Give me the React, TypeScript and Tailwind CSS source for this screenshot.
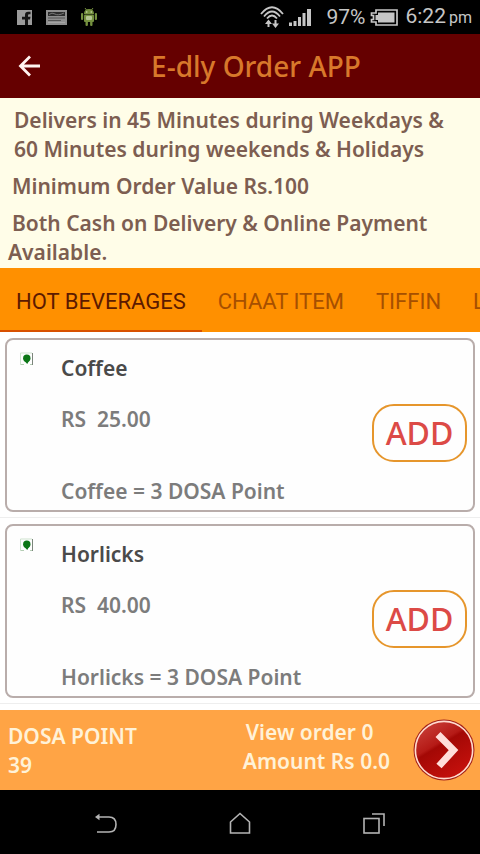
import { useState } from 'react';

const menu = [
  { name: 'Coffee', price: 25, points: 3 },
  { name: 'Horlicks', price: 40, points: 3 },
];

const tabs = ['HOT BEVERAGES', 'CHAAT ITEM', 'TIFFIN', 'LUNCH'];

function StatusBar() {
  return (
    <div className="h-[34px] shrink-0 bg-black flex items-center justify-between pl-[17px] pr-2 text-[#c6c6c6] font-normal">
      <div className="flex items-center gap-[14px]">
        <svg width="15" height="15" viewBox="0 0 15 15" aria-hidden="true">
          <rect width="15" height="15" fill="#9b9b9b" />
          <path d="M8 15V9.500H5V6.800H8V5Q8 1.700 11.200 1.700H13.500V4.300H12Q11 4.300 11 5.400V6.800H13.500L13 9.500H11V15Z" fill="#151515" />
        </svg>
        <svg width="21" height="15" viewBox="0 0 21 15" aria-hidden="true">
          <rect width="21" height="15" fill="#8f8f8f" />
          <rect x="2" y="2" width="17" height="4" fill="#2c2c2c" />
          <path d="M3 4.500Q6 2 9 4T18 3" stroke="#777" fill="none" />
          <path d="M2 8H19M2 10.500H15" stroke="#555" />
          <path d="M2 12.500H19" stroke="#a5a5a5" />
        </svg>
        <svg width="16" height="18" viewBox="0 0 16 18" fill="#74903f" aria-hidden="true">
          <path d="M4 0L5.500 2M12 0L10.500 2" stroke="#74903f" />
          <path d="M3 6Q3 1 8 1T13 6Z" />
          <rect x="3" y="6.500" width="10" height="7.500" rx="1" />
          <rect x="0" y="5" width="2.200" height="7" rx="1" />
          <rect x="13.800" y="5" width="2.200" height="7" rx="1" />
          <rect x="4.500" y="13" width="2.400" height="5" rx="1" />
          <rect x="9.100" y="13" width="2.400" height="5" rx="1" />
          <circle cx="5.800" cy="4" r="0.700" fill="#e5eccb" />
          <circle cx="10.200" cy="4" r="0.700" fill="#e5eccb" />
          <rect x="5" y="8" width="6" height="4" rx="1" fill="#b5c693" />
        </svg>
      </div>
      <div className="flex items-center">
        <svg width="24" height="23" viewBox="0 0 24 23" fill="none" stroke="#c6c6c6" strokeWidth="1.800" aria-hidden="true">
          <path d="M1 8Q12 -5.500 23 8" />
          <path d="M4 10.500Q12 0.500 20 10.500" />
          <path d="M7 12.500Q12 6.500 17 12.500" />
          <path d="M8.500 21V15M15.500 14V20" strokeWidth="2" />
          <path d="M5 18L8.500 13.500L12 18ZM12 17.500L15.500 22L19 17.500Z" fill="#c6c6c6" stroke="none" />
        </svg>
        <svg className="ml-[5px]" width="22" height="17" viewBox="0 0 22 17" fill="#c6c6c6" aria-hidden="true">
          <path d="M0 13.500H3V17H0ZM4.500 12H7.500V17H4.500ZM9 8H12V17H9ZM13.500 4H16.500V17H13.500ZM18 0H22V17H18Z" />
        </svg>
        <span className="ml-[15px] font-['Roboto'] text-[21px] leading-6">97%</span>
        <svg className="ml-[5px]" width="28" height="17" viewBox="0 0 28 17" aria-hidden="true">
          <path d="M6 1H27V16H6V13H1.500V10.500H3.500V6.500H1.500V4H6Z" fill="none" stroke="#c6c6c6" strokeWidth="1.700" />
          <path d="M8 3.500H24.500V13.500H8V11H5.500V6H8Z" fill="#c6c6c6" />
        </svg>
        <span className="ml-[7px] font-['Roboto'] text-[21px] leading-6 whitespace-nowrap">
          6:22<span className="ml-[3px] text-[16px]">pm</span>
        </span>
      </div>
    </div>
  );
}

function VegMark() {
  return (
    <svg width="14" height="14" viewBox="0 0 14 14" aria-hidden="true">
      <path d="M0.500 13V1H12" fill="none" stroke="#cfe3cf" />
      <path d="M12.500 1V13" stroke="#7b857b" />
      <path d="M1 12.500H4M10 12.500H12" stroke="#b5cdb5" />
      <circle cx="6.800" cy="6.300" r="3.700" fill="#0b7616" />
      <path d="M4.500 9H9L7.200 12Z" fill="#0b7616" />
    </svg>
  );
}

export default function App() {
  const [activeTab, setActiveTab] = useState('HOT BEVERAGES');
  const [order, setOrder] = useState({ count: 0, amount: 0 });

  const addItem = (price: number) => {
    setOrder({ count: order.count + 1, amount: order.amount + price });
  };

  return (
    <div className="min-h-screen w-full flex flex-col overflow-x-hidden bg-white font-['Noto_Sans',sans-serif] font-semibold">
      <StatusBar />

      {/* Header */}
      <header className="h-16 shrink-0 bg-[#650000] flex items-center px-[18px]">
        <button aria-label="Back" className="w-6 h-6 shrink-0">
          <svg width="24" height="24" viewBox="0 0 24 24" fill="none" stroke="#fff4f1" strokeWidth="2.800">
            <path d="M22 12H3M12 2.500L2.500 12L12 21.500" />
          </svg>
        </button>
        <h1 className="flex-1 pl-2 text-center text-[28px] leading-8 font-medium text-[#d8782b]">E-dly Order APP</h1>
      </header>

      {/* Delivery info */}
      <section className="shrink-0 bg-[#fffde8] pt-2 pb-[1px] px-2 text-[21px] leading-[29px] text-[#7d5e51]">
        <p className="pl-[6px]">
          Delivers in 45 Minutes during Weekdays &amp;<br />
          60 Minutes during weekends &amp; Holidays
        </p>
        <p className="mt-2 pl-1">Minimum Order Value Rs.100</p>
        <p className="mt-2 indent-1">Both Cash on Delivery &amp; Online Payment Available.</p>
      </section>

      {/* Category tabs */}
      <nav className="h-16 shrink-0 bg-[#ff9000] flex overflow-hidden font-['Roboto'] font-normal text-[22px]">
        {tabs.map((tab) => (
          <button
            key={tab}
            onClick={() => setActiveTab(tab)}
            className={`h-16 shrink-0 px-4 pt-1 border-b-2 whitespace-nowrap ${
              activeTab === tab ? 'border-[#d85000] text-[#5c1a00]' : 'border-transparent text-[#a64f00]'
            }`}
          >
            {tab}
          </button>
        ))}
      </nav>

      {/* Items */}
      <main className="flex-1 bg-white">
        {menu.map((item) => (
          <div key={item.name} className="px-[5px] pt-[6px] pb-[5px] border-b border-[#eeeeee]">
            <article className="flex items-stretch rounded-lg border-2 border-[#b9adab] bg-[#fefefe] pl-[13px] pr-[6px] py-3">
              <div className="w-[41px] shrink-0">
                <VegMark />
              </div>
              <div className="flex-1 text-[21px] leading-[29px] text-[#7c7c7c]">
                <h2 className="text-[#4a4a4a] mt-[2px]">{item.name}</h2>
                <p className="mt-[22px] whitespace-pre">RS  {item.price.toFixed(2)}</p>
                <p className="mt-[43px] -mb-2">{item.name} = {item.points} DOSA Point</p>
              </div>
              <button
                onClick={() => addItem(item.price)}
                className="self-center mt-4 h-[58px] w-[95px] shrink-0 rounded-[22px] border-2 border-[#e6962c] text-[32px] leading-10 font-medium text-[#dc4a46]"
              >
                ADD
              </button>
            </article>
          </div>
        ))}
      </main>

      {/* Order summary */}
      <footer className="h-20 shrink-0 bg-[#ffa445] flex items-center pl-2 pr-[5px] text-[21px] leading-[29px] text-[#fff2d8]">
        <div className="flex-1 pt-[2px]">
          <p>DOSA POINT</p>
          <p>39</p>
        </div>
        <div className="pb-[6px]">
          <p className="pl-[3px]">View order {order.count}</p>
          <p>Amount Rs {order.amount.toFixed(1)}</p>
        </div>
        <button aria-label="View order" className="ml-[23px] w-[62px] h-[62px] shrink-0">
          <svg width="62" height="62" viewBox="0 0 62 62">
            <defs>
              <linearGradient id="ball" x1="0" y1="0" x2="0.600" y2="1">
                <stop offset="0" stopColor="#cf4a42" />
                <stop offset="0.450" stopColor="#b51a16" />
                <stop offset="0.500" stopColor="#a30805" />
                <stop offset="1" stopColor="#c4100c" />
              </linearGradient>
            </defs>
            <circle cx="31" cy="31" r="30.500" fill="#a32118" />
            <circle cx="31" cy="31" r="28.600" fill="url(#ball)" stroke="#ffdcd0" strokeWidth="1.600" />
            <path d="M25 15.500L40.500 31L26 47" fill="none" stroke="#ffdeda" strokeWidth="7" />
          </svg>
        </button>
      </footer>

      {/* System navigation */}
      <div className="h-16 shrink-0 bg-black flex items-center justify-around px-[39px] pt-1">
        <button aria-label="System back">
          <svg width="24" height="24" viewBox="0 0 24 24" fill="none" stroke="#b4b4b4" strokeWidth="1.600">
            <path d="M4 5H15Q22 5 22 12.500T15 20H3" />
            <path d="M1 5L5.500 1.800V8.200Z" fill="#b4b4b4" stroke="none" />
          </svg>
        </button>
        <button aria-label="Home">
          <svg width="24" height="24" viewBox="0 0 24 24" fill="none" stroke="#b4b4b4" strokeWidth="1.600">
            <path d="M2.500 21V10L12 1.500L21.500 10V21Z" />
          </svg>
        </button>
        <button aria-label="Recent apps">
          <svg width="24" height="24" viewBox="0 0 24 24" fill="none" stroke="#b4b4b4" strokeWidth="1.600">
            <rect x="2" y="6.500" width="15" height="14.500" />
            <path d="M10 2H22V14" />
          </svg>
        </button>
      </div>
    </div>
  );
}
